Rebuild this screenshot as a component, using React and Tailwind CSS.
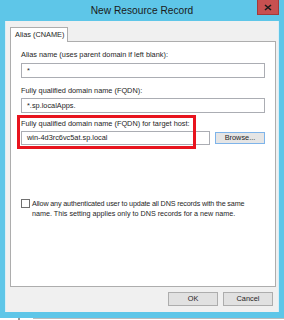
export default function App() {
  const font = { fontFamily: '"Liberation Sans", Arial, sans-serif' };
  return (
    <div className="w-[284px] h-[320px] bg-white overflow-hidden" style={font}>
      <div className="w-[284px] h-[318px] bg-[#5ec6e8] flex flex-col relative">
        <div className="h-[21px] flex items-center justify-center text-[10.2px] text-[#1a1a1a] pt-[1px]">
          New Resource Record
        </div>
        <div className="absolute right-[5px] top-0 w-[22px] h-[15px] bg-[#c75050] border border-[#a33a3a] border-t-0 flex items-center justify-center">
          <svg width="8" height="7" viewBox="0 0 8 7">
            <path d="M1 1 L7 6 M7 1 L1 6" stroke="#1a1a1a" strokeWidth="1.6" />
          </svg>
        </div>
        <div className="mx-[5px] h-[291px] bg-[#f0f0f0] border-l border-r border-[#d8eef7] flex flex-col">
          <div className="pl-[4px] pt-[6px] flex relative z-10">
            <div className="w-[58px] h-[15px] bg-white border border-[#adadad] border-b-0 flex items-center pl-[4px] text-[7.35px] text-[#1e1e1e]">
              Alias (CNAME)
            </div>
          </div>
          <div className="ml-[4px] -mt-[1px] w-[266px] h-[246px] bg-white border border-[#adadad] relative text-[7.35px] text-[#1e1e1e] leading-[10px]">
            <div className="pl-[10px] pr-[10px] pt-[8px] flex flex-col">
              <div>Alias name (uses parent domain if left blank):</div>
              <div className="mt-[3px] h-[15px] border border-[#abadb3] flex items-center pl-[5px]">*</div>
              <div className="mt-[8px]">Fully qualified domain name (FQDN):</div>
              <div className="mt-[2px] h-[15px] border border-[#abadb3] flex items-center pl-[5px]">*.sp.localApps.</div>
              <div className="mt-[6px]">Fully qualified domain name (FQDN) for target host:</div>
              <div className="mt-[2px] flex items-center gap-[5px]">
                <div className="w-[189px] h-[14px] border border-[#abadb3] flex items-center pl-[5px]">win-4d3rc6vc5at.sp.local</div>
                <div className="w-[50px] h-[12px] bg-[#e5e5e5] border border-[#7eb4ea] flex items-center justify-center">Browse...</div>
              </div>
              <div className="mt-[54px] flex items-start gap-[2px] text-[7.2px]">
                <div className="w-[9px] h-[9px] border border-[#707070] bg-white shrink-0"></div>
                <div>
                  <span className="tracking-[-0.15px]">Allow any authenticated user to update all DNS records with the same</span>
                  <br />
                  name. This setting applies only to DNS records for a new name.
                </div>
              </div>
            </div>
            <div className="absolute left-[6px] top-[73px] w-[179px] h-[34px] border-[3px] border-[#e8141e]"></div>
          </div>
          <div className="mt-[5px] pr-[5px] flex justify-end gap-[5px]">
            <div className="w-[50px] h-[14px] bg-[#e1e1e1] border border-[#adadad] flex items-center justify-center text-[7.35px] text-[#1e1e1e]">OK</div>
            <div className="w-[50px] h-[14px] bg-[#e1e1e1] border border-[#adadad] flex items-center justify-center text-[7.35px] text-[#1e1e1e]">Cancel</div>
          </div>
        </div>
      </div>
      <div className="h-[2px] flex">
        <div className="ml-[18px] w-[2px] h-[2px] bg-[#999]"></div>
        <div className="ml-[13px] w-[251px] h-[1px] bg-[#bbb]"></div>
      </div>
    </div>
  );
}
